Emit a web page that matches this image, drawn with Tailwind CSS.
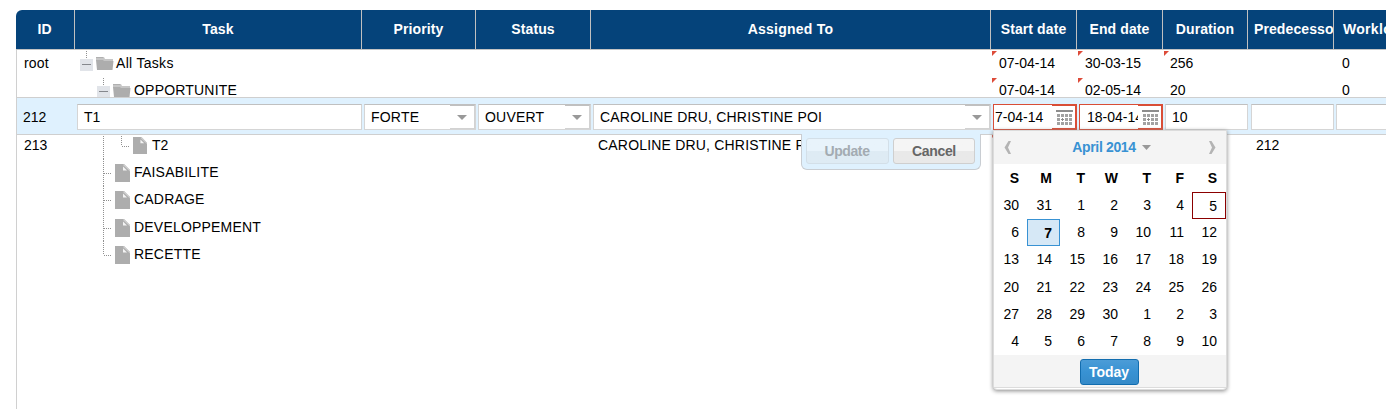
<!DOCTYPE html>
<html lang="en">
<head>
<meta charset="utf-8">
<title>Tasks</title>
<script src="https://cdn.jsdelivr.net/npm/@tailwindcss/browser@4"></script>
</head>
<body class="bg-white">
<svg class="hidden">
  <defs>
    <symbol id="folder" viewBox="0 0 18 15"><path d="M0 1h8l1 2h8v2H0z" fill="#c6c6c6"/><path d="M0 1h7v1H0z" fill="#b0b0b0"/><path d="M0 4h7l1 1h9.500l-1 9H1z" fill="#adadad"/></symbol>
    <symbol id="file" viewBox="0 0 15 18"><path d="M0 0h9l6 6v12H0z" fill="#adadad"/><path d="M8 2.500L12 6.500H8z" fill="#f4f4f4"/><path d="M9 0l6 6v1.500L8 1z" fill="#cfcfcf"/></symbol>
    <symbol id="minus" viewBox="0 0 13 12"><rect width="13" height="12" fill="#e1e4e9"/><path d="M2 5.500h9" stroke="#85888d"/></symbol>
    <symbol id="cal" viewBox="0 0 17 16"><path d="M0 0h17v2H0z" fill="#8d8d8d"/><path d="M1 4h3v3h-3zM5 4h3v3h-3zM9 4h3v3h-3zM13 4h3v3h-3zM1 8h3v3h-3zM9 8h3v3h-3zM13 8h3v3h-3zM1 12h3v3h-3zM5 12h3v3h-3zM9 12h3v3h-3zM13 12h3v3h-3z" fill="#a2a2a2"/><path d="M5 9.500h3M6.500 8v3" stroke="#8a8a8a"/></symbol>
  </defs>
</svg>
<div class="relative h-[409px] w-[1386px] overflow-hidden pt-[10px] pl-4 font-['Liberation_Sans',Arial,sans-serif] text-[14px] text-black">
  <!-- header -->
  <div class="flex h-10 w-[1404px] overflow-hidden rounded-tl-md border-b border-[#c4c4c4] bg-[#05437a] text-center leading-[39px] font-bold tracking-[0.1px] text-white">
    <div class="w-[59px] shrink-0 border-r border-[#c0c0c0] pr-px">ID</div>
    <div class="w-[287px] shrink-0 border-r border-[#c0c0c0]">Task</div>
    <div class="w-[114px] shrink-0 border-r border-[#c0c0c0]">Priority</div>
    <div class="w-[115px] shrink-0 border-r border-[#c0c0c0]">Status</div>
    <div class="w-[400px] shrink-0 border-r border-[#c0c0c0] tracking-[0.25px]">Assigned To</div>
    <div class="w-[86px] shrink-0 border-r border-[#c0c0c0]">Start date</div>
    <div class="w-[86px] shrink-0 border-r border-[#c0c0c0]">End date</div>
    <div class="w-[85px] shrink-0 border-r border-[#c0c0c0]">Duration</div>
    <div class="w-[86px] shrink-0 overflow-hidden border-r border-[#c0c0c0] pl-1.5 text-left whitespace-nowrap">Predecessor</div>
    <div class="w-[86px] shrink-0 pl-[9px] text-left tracking-[0.3px]">Workload</div>
  </div>
  <!-- body -->
  <div class="h-[360px] border-l border-[#d0d0d0] leading-[27px]">
    <div class="flex h-[27px]">
      <div class="w-[58px] shrink-0 pl-[7px] tracking-[0.2px]">root</div>
      <div class="flex w-[916px] shrink-0 tracking-[0.3px]">
        <svg class="h-[27px] w-[41px] shrink-0" viewBox="0 0 41 27"><path d="M11.500 1v8" stroke="#909090" stroke-dasharray="1 1"/><use href="#minus" x="5" y="9" width="13" height="12"/><use href="#folder" x="21" y="6" width="18" height="15"/></svg>All Tasks</div>
      <div class="w-[86px] shrink-0 pl-2"><i class="-ml-[7px] mt-px mr-[2px] inline-block size-[5px] bg-[#dd4b39] align-top [clip-path:polygon(0_0,100%_0,0_100%)]"></i>07-04-14</div>
      <div class="w-[86px] shrink-0 pl-2"><i class="-ml-[7px] mt-px mr-[2px] inline-block size-[5px] bg-[#dd4b39] align-top [clip-path:polygon(0_0,100%_0,0_100%)]"></i>30-03-15</div>
      <div class="w-[171px] shrink-0 pl-2"><i class="-ml-[7px] mt-px mr-px inline-block size-[5px] bg-[#dd4b39] align-top [clip-path:polygon(0_0,100%_0,0_100%)]"></i>256</div>
      <div class="pl-2">0</div>
    </div>
    <div class="flex h-[27px]">
      <div class="w-[58px] shrink-0 pl-[7px]"></div>
      <div class="flex w-[916px] shrink-0 tracking-[0.2px]">
        <svg class="h-[27px] w-[59px] shrink-0" viewBox="0 0 59 27"><path d="M28.500 1v8" stroke="#909090" stroke-dasharray="1 1"/><use href="#minus" x="22" y="9" width="13" height="12"/><use href="#folder" x="38" y="6" width="18" height="15"/></svg>OPPORTUNITE</div>
      <div class="w-[86px] shrink-0 pl-2"><i class="-ml-[7px] mt-px mr-[2px] inline-block size-[5px] bg-[#dd4b39] align-top [clip-path:polygon(0_0,100%_0,0_100%)]"></i>07-04-14</div>
      <div class="w-[86px] shrink-0 pl-2"><i class="-ml-[7px] mt-px mr-[2px] inline-block size-[5px] bg-[#dd4b39] align-top [clip-path:polygon(0_0,100%_0,0_100%)]"></i>02-05-14</div>
      <div class="w-[171px] shrink-0 pl-[7px]">20</div>
      <div class="pl-2">0</div>
    </div>
    <div class="h-[27px]"></div>
    <div class="flex h-[28px] pt-px">
      <div class="w-[58px] shrink-0 pl-[7px]">213</div>
      <div class="flex w-[516px] shrink-0">
        <svg class="h-[27px] w-[77px] shrink-0" viewBox="0 0 77 27"><path d="M28.500 0v27M46.500 0v14M47 14.500h8" stroke="#909090" stroke-dasharray="1 1"/><use href="#file" x="58" y="5" width="14" height="17"/></svg>T2</div>
      <div class="w-[400px] shrink-0 pl-[7px] tracking-[0.19px]">CAROLINE DRU, CHRISTINE POI</div>
      <div class="w-[257px] shrink-0 pl-px"><i class="mt-px block size-[5px] bg-[#dd4b39] [clip-path:polygon(0_0,100%_0,0_100%)]"></i></div>
      <div class="pl-2">212</div>
    </div>
    <div class="flex h-[27px] pl-[58px] tracking-[0.2px]"><svg class="h-[27px] w-[59px]" viewBox="0 0 59 27"><path d="M28.500 0v27M29 14.500h8" stroke="#909090" stroke-dasharray="1 1"/><use href="#file" x="40" y="5" width="15" height="18"/></svg>FAISABILITE</div>
    <div class="flex h-[27px] pl-[58px] tracking-[0.2px]"><svg class="h-[27px] w-[59px]" viewBox="0 0 59 27"><path d="M28.500 0v27M29 14.500h8" stroke="#909090" stroke-dasharray="1 1"/><use href="#file" x="40" y="5" width="15" height="18"/></svg>CADRAGE</div>
    <div class="flex h-[28px] pt-px pl-[58px] tracking-[0.2px]"><svg class="h-[27px] w-[59px]" viewBox="0 0 59 27"><path d="M28.500 0v27M29 14.500h8" stroke="#909090" stroke-dasharray="1 1"/><use href="#file" x="40" y="5" width="15" height="18"/></svg>DEVELOPPEMENT</div>
    <div class="flex h-[27px] pl-[58px] tracking-[0.2px]"><svg class="h-[27px] w-[59px]" viewBox="0 0 59 27"><path d="M28.500 0v14M29 14.500h8" stroke="#909090" stroke-dasharray="1 1"/><use href="#file" x="40" y="5" width="15" height="18"/></svg>RECETTE</div>
  </div>

  <!-- row editor -->
  <div class="absolute top-[97px] left-[17px] flex h-[38px] w-[1400px] border-y border-[#cfcfcf] bg-[#dff1fe] pt-[6px] leading-[24px]">
    <div class="w-[60px] shrink-0 pt-px pl-1.5">212</div>
    <div class="mr-[2px] h-[26px] w-[285px] shrink-0 border border-[#d5d5d5] border-t-[#c0c0c0] bg-white pl-1.5">T1</div>
    <div class="mr-[2px] flex h-[26px] w-[112px] shrink-0 justify-between border border-[#d5d5d5] border-t-[#c0c0c0] bg-white pl-1.5 tracking-[0.2px]">FORTE<span class="flex w-[25px] items-center justify-center border-r border-b border-t border-[#d2d2d2] border-t-[#c0c0c0]"><svg class="h-[5px] w-[10px]" viewBox="0 0 10 5"><path d="M0 0h10L5 5z" fill="#999"/></svg></span></div>
    <div class="mr-[2px] flex h-[26px] w-[113px] shrink-0 justify-between border border-[#d5d5d5] border-t-[#c0c0c0] bg-white pl-1.5 tracking-[0.2px]">OUVERT<span class="flex w-[25px] items-center justify-center border-r border-b border-t border-[#d2d2d2] border-t-[#c0c0c0]"><svg class="h-[5px] w-[10px]" viewBox="0 0 10 5"><path d="M0 0h10L5 5z" fill="#999"/></svg></span></div>
    <div class="mr-[2px] flex h-[26px] w-[398px] shrink-0 justify-between border border-[#d5d5d5] border-t-[#c0c0c0] bg-white pl-1.5 tracking-[0.19px]">CAROLINE DRU, CHRISTINE POI<span class="flex w-[25px] items-center justify-center border-r border-b border-t border-[#d2d2d2] border-t-[#c0c0c0]"><svg class="h-[5px] w-[10px]" viewBox="0 0 10 5"><path d="M0 0h10L5 5z" fill="#999"/></svg></span></div>
    <div class="mr-[2px] flex h-[26px] w-[84px] shrink-0 border border-[#d94e37] bg-white"><span class="flex w-[58px] shrink-0 pl-px">7-04-14</span><span class="w-6 shrink-0 border-y border-r border-[#d94e37] pt-[4px] pl-[4px]"><svg class="h-4 w-[17px]"><use href="#cal"/></svg></span></div>
    <div class="mr-[2px] flex h-[26px] w-[84px] shrink-0 border border-[#d94e37] bg-white"><span class="w-[58px] shrink-0 overflow-hidden pl-[7px] whitespace-nowrap">18-04-14</span><span class="w-6 shrink-0 border-y border-r border-[#d94e37] pt-[4px] pl-[4px]"><svg class="h-4 w-[17px]"><use href="#cal"/></svg></span></div>
    <div class="mr-[3px] h-[26px] w-[83px] shrink-0 border border-[#d5d5d5] border-t-[#c0c0c0] bg-white pl-1.5">10</div>
    <div class="mr-[2px] h-[26px] w-[83px] shrink-0 border border-[#d5d5d5] border-t-[#c0c0c0] bg-white"></div>
    <div class="h-[26px] w-[83px] shrink-0 border border-[#d5d5d5] border-t-[#c0c0c0] bg-white"></div>
  </div>
  <div class="absolute top-[134px] left-[801px] flex h-[36px] w-[180px] gap-[4px] rounded-b-md border border-t-0 border-[#c9cdd2] bg-[#dff1fe] pt-[4px] pl-[4px] text-center leading-[25px] font-bold tracking-[-0.35px]">
    <div class="h-[26px] w-[83px] rounded-[3px] border border-[#d3dfe8] bg-linear-to-b from-[#e8f3fb] from-50% to-[#deebf4] to-50% pr-px tracking-[-0.4px] text-[#a3abb2]">Update</div>
    <div class="h-[26px] w-[82px] rounded-[3px] border border-[#cfcfcf] bg-linear-to-b from-[#f5f5f5] from-50% to-[#e9e9e9] to-50% text-[#666]">Cancel</div>
  </div>

  <!-- date picker -->
  <div class="absolute top-[130px] left-[993px] flex h-[260px] w-[234px] flex-col rounded-b-[4px] border border-[#dcdcdc] bg-white shadow-[0_1px_4px_#888]">
    <div class="flex h-[33px] items-center justify-between bg-[#f4f4f4] px-[10px]">
      <svg class="h-[13px] w-[7px]" viewBox="0 0 7 13"><path d="M7 0H4.500L0.500 6.500 4.500 13H7L4 6.500z" fill="#b4b4b4"/></svg>
      <span class="flex items-center gap-1.5 pl-[3px] font-bold tracking-[-0.35px] text-[#3892d3]">April 2014<svg class="h-[5px] w-[9px]" viewBox="0 0 9 5"><path d="M0 0h9L4.500 5z" fill="#999"/></svg></span>
      <svg class="h-[13px] w-[7px]" viewBox="0 0 7 13"><path d="M0 0h2.500l4 6.500L2.500 13H0l3-6.500z" fill="#b4b4b4"/></svg>
    </div>
    <div class="grid h-[191px] grid-cols-[repeat(6,33px)_34px] grid-rows-7 pt-px text-right leading-[27.300px] *:pr-2">
      <b>S</b><b>M</b><b>T</b><b>W</b><b>T</b><b>F</b><b class="pr-[9px]!">S</b>
      <span>30</span><span>31</span><span>1</span><span>2</span><span>3</span><span>4</span><span class="border border-[#8b0000] leading-[26px]">5</span>
      <span>6</span><b class="border border-[#3892d3] bg-[#d6e8f6] pr-[7px]! leading-[26px]">7</b><span>8</span><span>9</span><span>10</span><span>11</span><span class="pr-[9px]!">12</span>
      <span>13</span><span>14</span><span>15</span><span>16</span><span>17</span><span>18</span><span class="pr-[9px]!">19</span>
      <span>20</span><span>21</span><span>22</span><span>23</span><span>24</span><span>25</span><span class="pr-[9px]!">26</span>
      <span>27</span><span>28</span><span>29</span><span>30</span><span>1</span><span>2</span><span class="pr-[9px]!">3</span>
      <span>4</span><span>5</span><span>6</span><span>7</span><span>8</span><span>9</span><span class="pr-[9px]!">10</span>
    </div>
    <div class="flex h-[33px] justify-center border-b border-[#dcdcdc] bg-[#f4f4f4] pt-[4px] pr-[2px]">
      <div class="h-[26px] w-[59px] rounded-[3px] border border-[#126daf] bg-linear-to-b from-[#4b9cd7] via-[#3892d3] via-50% to-[#358ac8] text-center leading-[24px] font-bold text-white">Today</div>
    </div>
  </div>
</div>
</body>
</html>
